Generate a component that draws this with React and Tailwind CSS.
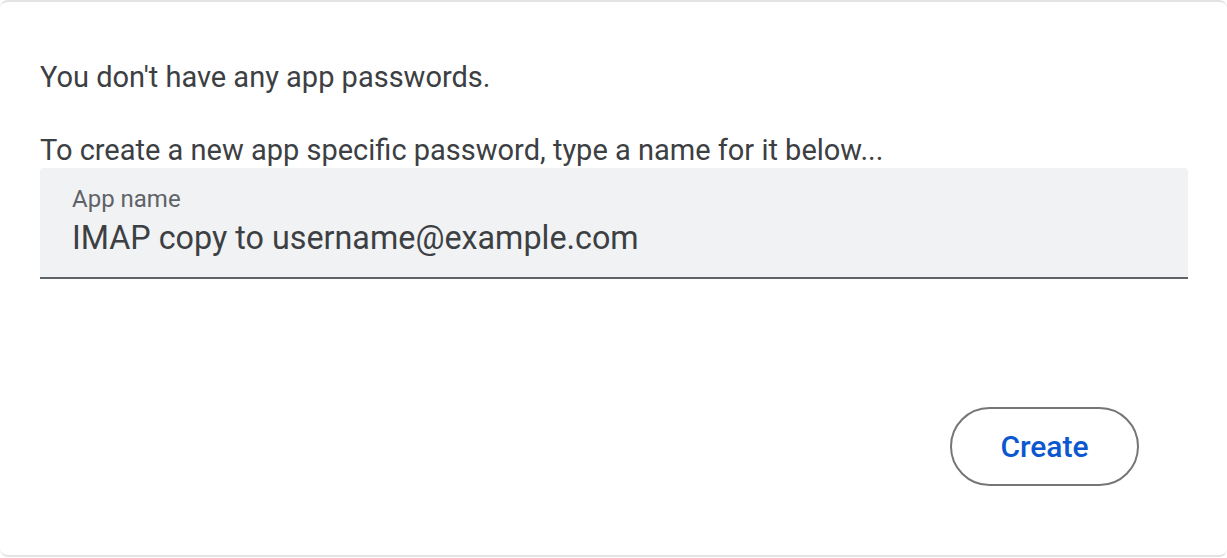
import React from "react";

export default function App() {
  return (
    <div
      className="h-[558px] w-[1227px] overflow-hidden bg-white"
      style={{ fontFamily: "Roboto, 'Liberation Sans', sans-serif" }}
    >
      <div className="flex h-[557px] flex-col rounded-lg border-t-2 border-b-2 border-[#e3e3e3] px-10 pt-[57px]">
        <p className="text-[29px] leading-[36px] text-[#3c4043]">You don't have any app passwords.</p>
        <p className="mt-[37px] text-[29px] leading-[36px] text-[#3c4043]">
          To create a new app specific password, type a name for it below...
        </p>

        <div className="flex h-[111px] w-[1148px] flex-col rounded-t border-b-2 border-[#5f6368] bg-[#f1f2f4] px-8 pt-[17px]">
          <label className="text-[24px] leading-[28px] text-[#5f6368]">App name</label>
          <input
            readOnly
            value="IMAP copy to username@example.com"
            className="mt-[5px] bg-transparent text-[32.3px] leading-[40px] text-[#3c4043] outline-none"
          />
        </div>

        <div className="mt-[128px] flex w-[1148px] justify-end pr-[49px]">
          <button
            type="button"
            className="h-[79px] w-[189px] rounded-full border-2 border-[#767676] bg-white text-[30px] font-medium text-[#0b57d0]"
          >
            Create
          </button>
        </div>
      </div>
    </div>
  );
}
